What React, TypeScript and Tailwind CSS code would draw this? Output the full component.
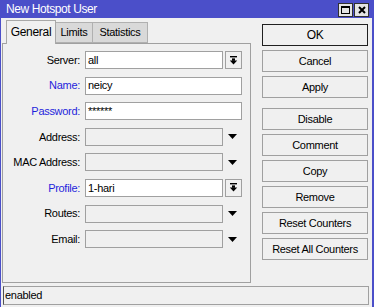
import React from "react";

const font = { fontFamily: '"Liberation Sans", Arial, sans-serif' };

function ArrowBtn() {
  return (
    <div className="ml-[2px] w-[17px] h-[18px] border border-[#a0a0a0] bg-[#f0f0f0] flex items-center justify-center">
      <svg width="9" height="9" viewBox="0 0 9 9">
        <rect x="1" y="0" width="7" height="1.4" fill="#000" />
        <rect x="3" y="2.4" width="3" height="2.4" fill="#000" />
        <polygon points="0.8,4.6 8.2,4.6 4.5,8.6" fill="#000" />
      </svg>
    </div>
  );
}

function Tri() {
  return (
    <div className="w-[19px] flex items-center justify-center">
      <svg width="9" height="5" viewBox="0 0 9 5">
        <polygon points="0,0 9,0 4.5,5" fill="#000" />
      </svg>
    </div>
  );
}

type Row = {
  label: string;
  blue?: boolean;
  kind: "select" | "text" | "disabled";
  value?: string;
};

const rows: Row[] = [
  { label: "Server:", kind: "select", value: "all" },
  { label: "Name:", blue: true, kind: "text", value: "neicy" },
  { label: "Password:", blue: true, kind: "text", value: "******" },
  { label: "Address:", kind: "disabled" },
  { label: "MAC Address:", kind: "disabled" },
  { label: "Profile:", blue: true, kind: "select", value: "1-hari" },
  { label: "Routes:", kind: "disabled" },
  { label: "Email:", kind: "disabled" },
];

const buttons = ["OK", "Cancel", "Apply", "Disable", "Comment", "Copy", "Remove", "Reset Counters", "Reset All Counters"];

export default function App() {
  return (
    <div
      className="w-[374px] h-[307px] bg-[#f0f0f0] flex flex-col text-[11px] tracking-[-0.3px] text-black overflow-hidden"
      style={font}
    >
      {/* title bar */}
      <div className="h-[18px] bg-[#4b4fc9] flex items-center shrink-0">
        <span className="ml-[6px] text-white text-[12px] tracking-[-0.4px] flex-1 leading-none">New Hotspot User</span>
        <div className="w-[15px] h-[14px] mt-[2px] bg-[#e4e4e4] border border-[#303030] flex items-center justify-center">
          <div className="w-[9px] h-[8px] border border-black border-t-2" />
        </div>
        <div className="ml-[1px] mr-[5px] w-[15px] h-[14px] mt-[2px] bg-[#e4e4e4] border border-[#303030] flex items-center justify-center">
          <svg width="8" height="8" viewBox="0 0 8 8">
            <path d="M1 1 L7 7 M7 1 L1 7" stroke="#000" strokeWidth="2" />
          </svg>
        </div>
      </div>

      <div className="flex-1 flex border-l border-[#4b4fc9] border-r-2 border-r-[#4b4fc9]">
        <div className="flex-1 flex flex-col">
          <div className="flex">
            {/* left */}
            <div className="w-[249px] ml-[1px] flex flex-col">
              <div className="flex items-end h-[25px] pl-[4px]">
                <div className="h-[24px] w-[50px] bg-[#f0f0f0] border border-[#a8a8a8] border-b-0 flex items-center justify-center pb-[1px] relative top-[1px] text-[12px]">
                  General
                </div>
                <div className="h-[21px] w-[37px] bg-[#d9d9d9] border border-[#b0b0b0] border-l-0 flex items-center justify-center">
                  Limits
                </div>
                <div className="h-[21px] w-[55px] bg-[#d9d9d9] border border-[#b0b0b0] border-l-0 flex items-center justify-center">
                  Statistics
                </div>
              </div>
              <div className="h-[240px] border border-[#a0a0a0] pt-[7px] flex flex-col gap-[7.6px]">
                {rows.map((r) => (
                  <div key={r.label} className="flex items-center h-[18px]">
                    <div className={"w-[77px] text-right " + (r.blue ? "text-[#1f1fdc]" : "text-black")}>{r.label}</div>
                    <div className="ml-[5px] flex h-[18px]">
                      {r.kind === "select" && (
                        <>
                          <div className="w-[138px] h-[18px] bg-white border border-[#a0a0a0] flex items-center pl-[2px]">{r.value}</div>
                          <ArrowBtn />
                        </>
                      )}
                      {r.kind === "text" && (
                        <div className="w-[157px] h-[18px] bg-white border border-[#a0a0a0] flex items-center pl-[2px]">{r.value}</div>
                      )}
                      {r.kind === "disabled" && (
                        <>
                          <div className="w-[138px] h-[18px] bg-[#f0f0f0] border border-[#a0a0a0]" />
                          <Tri />
                        </>
                      )}
                    </div>
                  </div>
                ))}
              </div>
            </div>
            {/* right buttons */}
            <div className="ml-[11px] pt-[6px] flex flex-col">
              {buttons.map((b, i) => (
                <div
                  key={b}
                  className={
                    "w-[106px] h-[22px] flex items-center justify-center bg-[#f0f0f0] border " +
                    (i === 0 ? "border-[#202020] text-[12px]" : "border-[#a0a0a0]") +
                    (i === 0 ? "" : i === 3 ? " mt-[10px]" : " mt-[4px]")
                  }
                >
                  {b}
                </div>
              ))}
            </div>
          </div>
          <div className="mt-[3px] ml-[2px] w-[366px] h-[19px] border border-[#a0a0a0] border-l-[#505050] flex items-center pl-[1px]">
            enabled
          </div>
        </div>
      </div>
    </div>
  );
}
